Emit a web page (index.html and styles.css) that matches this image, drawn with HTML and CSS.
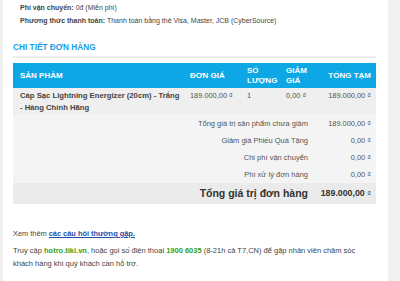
FILE: index.html
```html
<!DOCTYPE html>
<html lang="vi">
<head>
<meta charset="utf-8">
<link rel="stylesheet" href="styles.css">
</head>
<body>
<div class="page">
  <div class="panel">
    <div class="info">
      <p><b>Phí vận chuyển:</b> 0đ (Miễn phí)</p>
      <p><b>Phương thức thanh toán:</b> Thanh toán bằng thẻ Visa, Master, JCB (CyberSource)</p>
    </div>
    <h2 class="heading">CHI TIẾT ĐƠN HÀNG</h2>
    <table class="order">
      <colgroup>
        <col class="c-prod"><col class="c-price"><col class="c-qty"><col class="c-disc"><col class="c-total">
      </colgroup>
      <thead>
        <tr>
          <th>SẢN PHẨM</th>
          <th>ĐƠN GIÁ</th>
          <th>SỐ LƯỢNG</th>
          <th>GIẢM GIÁ</th>
          <th class="r">TỔNG TẠM</th>
        </tr>
      </thead>
      <tbody>
        <tr class="item">
          <td class="name">Cáp Sạc Lightning Energizer (20cm) - Trắng - Hàng Chính Hãng</td>
          <td>189.000,00 ₫</td>
          <td>1</td>
          <td>0,00 ₫</td>
          <td class="r">189.000,00 ₫</td>
        </tr>
        <tr class="sum"><td colspan="4" class="lab">Tổng giá trị sản phẩm chưa giảm</td><td class="r">189.000,00 ₫</td></tr>
        <tr class="sum"><td colspan="4" class="lab">Giảm giá Phiếu Quà Tặng</td><td class="r">0,00 ₫</td></tr>
        <tr class="sum"><td colspan="4" class="lab">Chi phí vận chuyển</td><td class="r">0,00 ₫</td></tr>
        <tr class="sum"><td colspan="4" class="lab">Phí xử lý đơn hàng</td><td class="r">0,00 ₫</td></tr>
        <tr class="grand"><td colspan="4" class="lab">Tổng giá trị đơn hàng</td><td class="r">189.000,00 <span class="cur">₫</span></td></tr>
      </tbody>
    </table>
    <p class="more">Xem thêm <a href="#">các câu hỏi thường gặp.</a></p>
    <p class="help">Truy cập <b class="green">hotro.tiki.vn</b>, hoặc gọi số điện thoại <b class="green">1900 6035</b> (8-21h cả T7,CN) để gặp nhân viên chăm sóc khách hàng khi quý khách cần hỗ trợ.</p>
  </div>
</div>
</body>
</html>
```

FILE: styles.css
```css
* { box-sizing: border-box; }
html, body { margin: 0; padding: 0; }
body {
  background: #f0f0f0;
  font-family: "Liberation Sans", Arial, sans-serif;
  font-size: 7.4px;
  color: #444;
}
.page {
  display: flex;
  padding-left: 3px;
}
.panel {
  width: 385px;
  height: 281px;
  background: #fff;
  padding: 0 12px 0 10px;
  overflow: hidden;
}
.info {
  padding: 1px 0 0 7px;
  font-size: 7px;
}
.info p {
  margin: 0;
  line-height: 13px;
}
.info b { color: #444; }
.heading {
  margin: 14px 0 0 0;
  font-size: 8.3px;
  font-weight: bold;
  color: #1aa0e6;
  line-height: 12px;
  padding-bottom: 3px;
  border-bottom: 2px solid #eeeeee;
}
.order {
  margin-top: 5px;
  width: 363px;
  border-collapse: collapse;
  table-layout: fixed;
}
.c-prod { width: 170px; }
.c-price { width: 57px; }
.c-qty { width: 39px; }
.c-disc { width: 39px; }
.c-total { width: 58px; }
.order th {
  background: #0ea7e6;
  color: #fff;
  font-weight: bold;
  text-align: left;
  height: 25px;
  padding: 0 2px 0 7px;
  line-height: 10px;
  font-size: 8px;
}
.order th.r, .order td.r { text-align: right; padding-right: 5px; padding-left: 0; }
.order td {
  padding: 0 2px 0 7px;
  vertical-align: top;
  color: #555;
}
.item td {
  background: #efefef;
  padding-top: 2px;
  padding-bottom: 1px;
  line-height: 12px;
  height: 25px;
}
.item td.name {
  font-weight: bold;
  color: #444;
  font-size: 7.7px;
}
.sum td {
  background: #f4f4f4;
  height: 17px;
  line-height: 17px;
  white-space: nowrap;
}
.sum td.lab { text-align: right; padding-right: 10px; font-size: 7.5px; }
.grand td {
  background: #ebebeb;
  height: 20px;
  line-height: 20px;
  font-weight: bold;
  color: #333;
  white-space: nowrap;
}
.grand td.lab { text-align: right; padding-right: 10px; font-size: 10.5px; }
.grand td.r { font-size: 8.8px; }
.grand .cur { font-weight: normal; font-size: 7.4px; }
.more {
  margin: 23px 0 0 0;
  line-height: 13px;
}
.more a {
  color: #1d4fa5;
  font-weight: bold;
  text-decoration: underline;
}
.help {
  margin: 4px 0 0 0;
  line-height: 13px;
  font-size: 7.5px;
  padding-right: 6px;
}
.green { color: #34a01c; }
```
